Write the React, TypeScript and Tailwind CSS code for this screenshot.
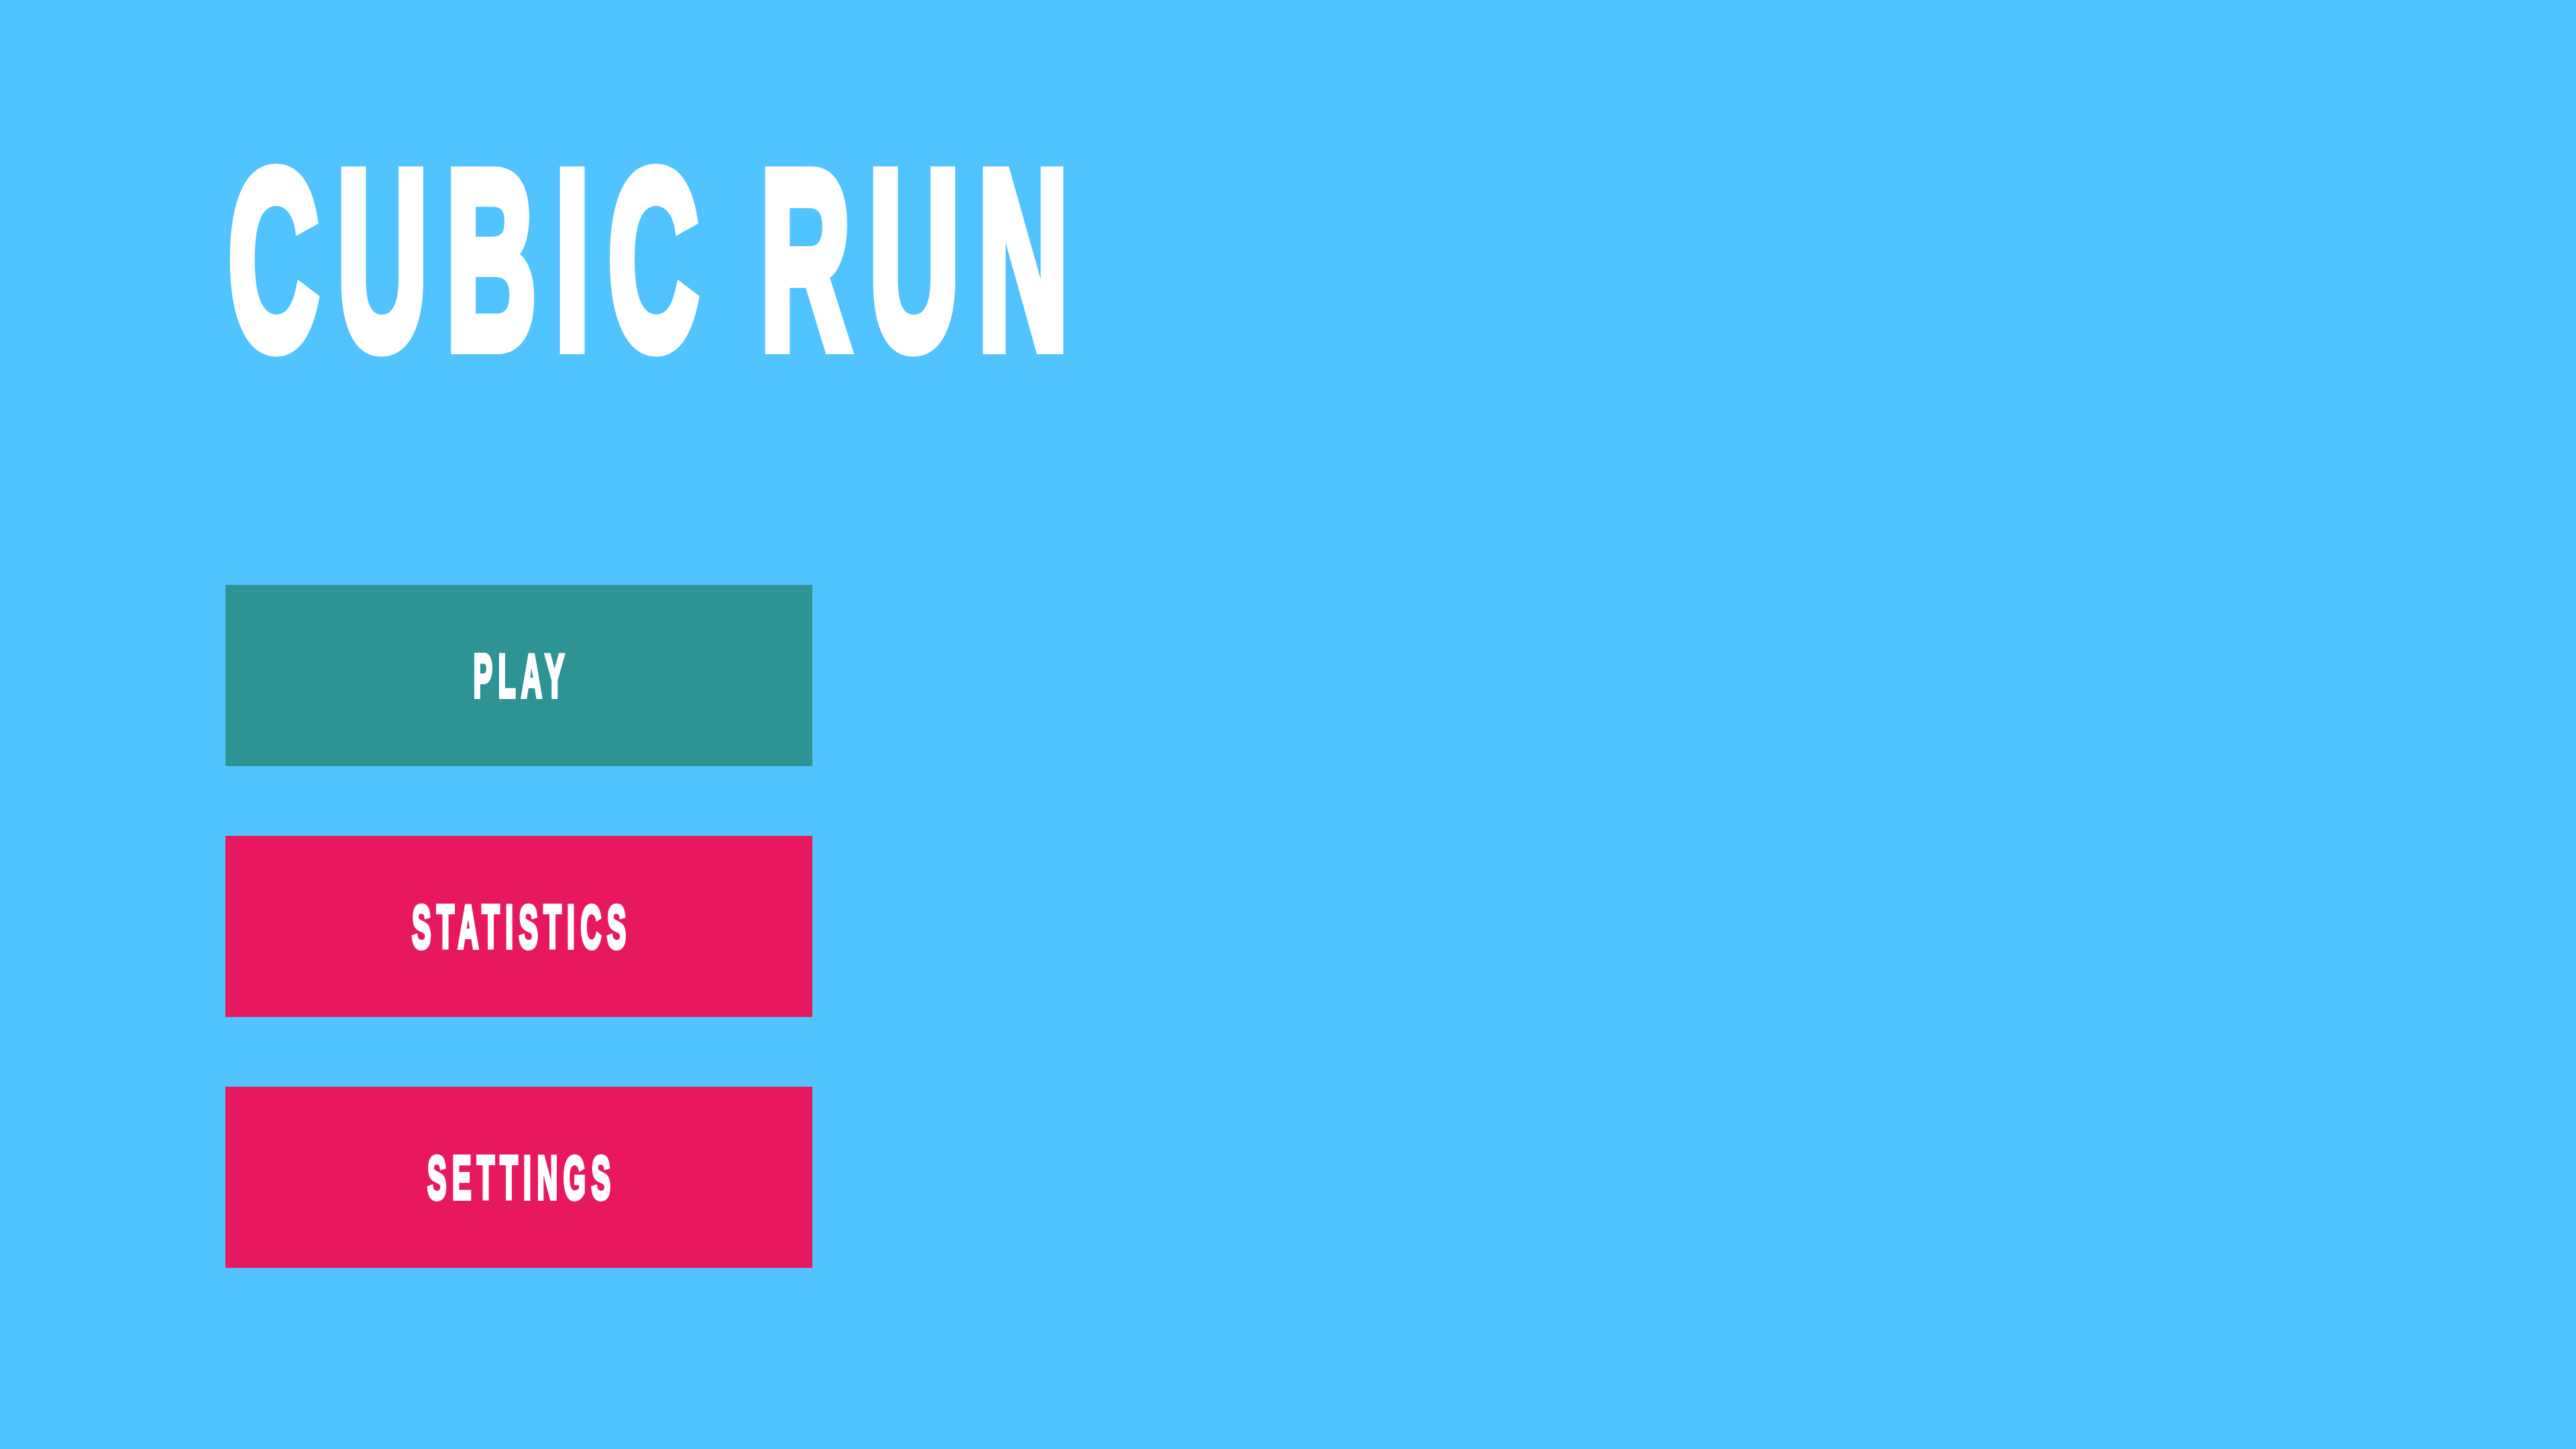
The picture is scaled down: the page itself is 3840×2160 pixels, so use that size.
const menuItems = [
  { label: 'PLAY', color: 'bg-[#2e9393]' },
  { label: 'STATISTICS', color: 'bg-[#e8185f]' },
  { label: 'SETTINGS', color: 'bg-[#e8185f]' },
];

export default function App() {
  return (
    <div className="w-full min-h-screen h-[2160px] bg-[#51c3fe] pl-[340px] pt-[198px] font-['Liberation_Sans',Arial,sans-serif] text-white">
      {/* Title */}
      <h1 className="h-[378px] text-[378px] leading-none font-bold whitespace-nowrap tracking-[55px] [word-spacing:-30px] [-webkit-text-stroke:20px_white]">
        <span className="inline-block origin-left scale-x-[0.495]">CUBIC RUN</span>
      </h1>

      {/* Menu */}
      <div className="mt-[296px] -ml-[4px] flex flex-col gap-[104px]">
        {menuItems.map((item) => (
          <button
            key={item.label}
            className={`${item.color} w-[875px] h-[270px] flex items-center justify-center`}
          >
            <span className="inline-block pl-[18px] text-[91px] leading-none font-bold tracking-[18px] scale-x-[0.47] [-webkit-text-stroke:6px_white]">
              {item.label}
            </span>
          </button>
        ))}
      </div>
    </div>
  );
}
